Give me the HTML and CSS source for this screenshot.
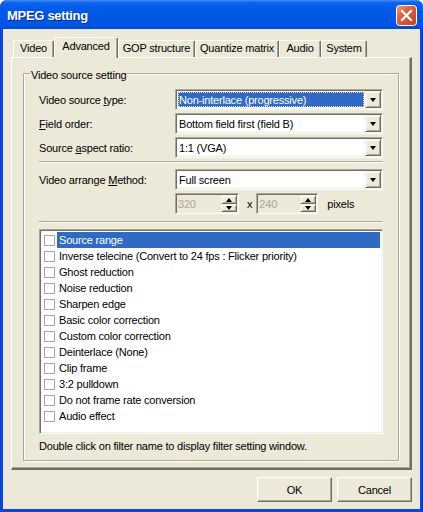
FILE: index.html
```html
<!DOCTYPE html>
<html>
<head>
<meta charset="utf-8">
<title>MPEG setting</title>
<link rel="stylesheet" href="styles.css">
</head>
<body>
<div class="window">
  <div class="titlebar">
    <span class="title">MPEG setting</span>
    <div class="close">
      <svg width="21" height="21" viewBox="0 0 21 21">
        <defs>
          <linearGradient id="cg" x1="0" y1="0" x2="1" y2="1">
            <stop offset="0" stop-color="#F0A18A"/>
            <stop offset="0.35" stop-color="#E06343"/>
            <stop offset="1" stop-color="#C2401C"/>
          </linearGradient>
        </defs>
        <rect x="0.5" y="0.5" width="20" height="20" rx="3" ry="3" fill="url(#cg)" stroke="#FFFFFF"/>
        <path d="M6 6 L15 15 M15 6 L6 15" stroke="#FFFFFF" stroke-width="2.2" stroke-linecap="square"/>
      </svg>
    </div>
  </div>
  <div class="frame">
    <div class="client">
      <div class="tabs">
        <div class="tab tw-video">Video</div>
        <div class="tab tab-active tw-adv">Advanced</div>
        <div class="tab tw-gop">GOP structure</div>
        <div class="tab tw-quant">Quantize matrix</div>
        <div class="tab tw-audio">Audio</div>
        <div class="tab tw-system">System</div>
      </div>
      <div class="panel">
        <div class="group">
          <div class="legend">Video source setting</div>
          <div class="row">
            <span class="label">Video source <u>t</u>ype:</span>
            <div class="combo">
              <span class="ctext ctext-focus"><span class="ctext-sel">Non-interlace (progressive)</span></span>
              <span class="ddbtn"><span class="arrow-down"></span></span>
            </div>
          </div>
          <div class="row">
            <span class="label"><u>F</u>ield order:</span>
            <div class="combo">
              <span class="ctext">Bottom field first (field B)</span>
              <span class="ddbtn"><span class="arrow-down"></span></span>
            </div>
          </div>
          <div class="row">
            <span class="label">Source <u>a</u>spect ratio:</span>
            <div class="combo">
              <span class="ctext">1:1 (VGA)</span>
              <span class="ddbtn"><span class="arrow-down"></span></span>
            </div>
          </div>
          <div class="sep sep-a"></div>
          <div class="row">
            <span class="label">Video arrange <u>M</u>ethod:</span>
            <div class="combo">
              <span class="ctext">Full screen</span>
              <span class="ddbtn"><span class="arrow-down"></span></span>
            </div>
          </div>
          <div class="spinrow">
            <div class="spin spin-w1">
              <span class="spintext">320</span>
              <span class="spinbtns">
                <span class="spinbtn spin-up"><span class="arrow-up"></span></span>
                <span class="spinbtn spin-down"><span class="arrow-down"></span></span>
              </span>
            </div>
            <span class="times">x</span>
            <div class="spin spin-w2">
              <span class="spintext">240</span>
              <span class="spinbtns">
                <span class="spinbtn spin-up"><span class="arrow-up"></span></span>
                <span class="spinbtn spin-down"><span class="arrow-down"></span></span>
              </span>
            </div>
            <span class="pixels">pixels</span>
          </div>
          <div class="sep sep-b"></div>
          <div class="list">
            <div class="item"><span class="chk"></span><span class="itext itext-sel">Source range</span></div>
            <div class="item"><span class="chk"></span><span class="itext">Inverse telecine (Convert to 24 fps : Flicker priority)</span></div>
            <div class="item"><span class="chk"></span><span class="itext">Ghost reduction</span></div>
            <div class="item"><span class="chk"></span><span class="itext">Noise reduction</span></div>
            <div class="item"><span class="chk"></span><span class="itext">Sharpen edge</span></div>
            <div class="item"><span class="chk"></span><span class="itext">Basic color correction</span></div>
            <div class="item"><span class="chk"></span><span class="itext">Custom color correction</span></div>
            <div class="item"><span class="chk"></span><span class="itext">Deinterlace (None)</span></div>
            <div class="item"><span class="chk"></span><span class="itext">Clip frame</span></div>
            <div class="item"><span class="chk"></span><span class="itext">3:2 pulldown</span></div>
            <div class="item"><span class="chk"></span><span class="itext">Do not frame rate conversion</span></div>
            <div class="item"><span class="chk"></span><span class="itext">Audio effect</span></div>
          </div>
          <div class="hint">Double click on filter name to display filter setting window.</div>
        </div>
      </div>
      <div class="buttons">
        <div class="btn">OK</div>
        <div class="btn">Cancel</div>
      </div>
    </div>
  </div>
</div>
</body>
</html>
```

FILE: styles.css
```css
* { box-sizing: border-box; }
html, body { margin: 0; padding: 0; }
body {
  width: 423px;
  height: 512px;
  overflow: hidden;
  background: #FFFFFF;
  font-family: "Liberation Sans", Arial, sans-serif;
  font-size: 11px;
  letter-spacing: -0.2px;
  color: #000000;
}
u { text-decoration: underline; text-underline-offset: 1px; }

.window {
  width: 423px;
  height: 512px;
  display: flex;
  flex-direction: column;
  border-radius: 7px 7px 0 0;
  overflow: hidden;
  background: #0A3FD8;
}

.titlebar {
  height: 29px;
  flex: none;
  display: flex;
  justify-content: space-between;
  align-items: flex-start;
  padding: 5px 6px 0 7px;
  background: linear-gradient(180deg, #4A8FF6 0px, #1468EE 2px, #0660EC 4px, #0058E6 45%, #0056E6 85%, #0049D2 100%);
}
.title {
  color: #FFFFFF;
  font-weight: bold;
  font-size: 13px;
  letter-spacing: -0.3px;
  line-height: 21px;
  text-shadow: 1px 1px 0 #0A2A8C;
}
.close { width: 21px; height: 21px; }
.close svg { display: block; }

.frame {
  flex: 1;
  display: flex;
  padding: 0 3px 3px 3px;
  background: linear-gradient(90deg, #0831D9 0, #0A48E0 1px, #0A48E0 calc(100% - 1px), #001DA8 100%);
}
.client {
  flex: 1;
  display: flex;
  flex-direction: column;
  background: #ECE9D8;
  padding: 8px 8px 7px 8px;
}

/* tabs */
.tabs {
  height: 20px;
  flex: none;
  display: flex;
  align-items: flex-end;
  padding-left: 2px;
}
.tab {
  height: 17px;
  line-height: 15px;
  text-align: center;
  background: #ECE9D8;
  border-top: 1px solid #FFFFFF;
  border-left: 1px solid #FFFFFF;
  border-right: 1px solid #716F64;
  box-shadow: inset -1px 0 0 #ACA899;
  border-radius: 2px 2px 0 0;
  white-space: nowrap;
}
.tab-active {
  height: 21px;
  line-height: 17px;
  margin-bottom: -1px;
  position: relative;
  z-index: 1;
}
.tw-video { width: 41px; }
.tw-adv { width: 64px; }
.tw-gop { width: 77px; }
.tw-quant { width: 84px; }
.tw-audio { width: 42px; }
.tw-system { width: 46px; }

.panel {
  flex: 1;
  border-top: 1px solid #FFFFFF;
  border-left: 1px solid #FFFFFF;
  border-right: 2px solid #716F64;
  border-bottom: 2px solid #716F64;
  box-shadow: inset -1px -1px 0 #ACA899;
  padding: 15px 11px 7px 11px;
  background: #ECE9D8;
}
.group {
  border: 1px solid #ACA899;
  box-shadow: 1px 1px 0 #FFFFFF, inset 1px 1px 0 #FFFFFF;
  padding: 0 15px 7px 15px;
}
.legend {
  display: table;
  margin: -5px 0 7px -9px;
  padding: 0 1px;
  line-height: 13px;
  background: #ECE9D8;
}

.row {
  display: flex;
  align-items: center;
  height: 21px;
  margin-bottom: 3px;
}
.label {
  width: 136px;
  flex: none;
  white-space: nowrap;
}

.combo, .spin, .list {
  border: 1px solid;
  border-color: #ACA899 #FFFFFF #FFFFFF #ACA899;
  box-shadow: inset 1px 1px 0 #716F64, inset -1px -1px 0 #F1EFE2;
  padding: 1px;
}
.combo {
  flex: 1;
  height: 21px;
  display: flex;
  background: #FFFFFF;
}
.ctext {
  flex: 1;
  display: flex;
  align-items: center;
  padding-left: 2px;
  white-space: nowrap;
}
.ctext-focus {
  padding: 1px;
}
.ctext-sel {
  flex: 1;
  align-self: stretch;
  display: flex;
  align-items: center;
  padding-left: 1px;
  background: #316AC5;
  color: #FFFFFF;
  outline: 1px dotted #C9D6EE;
  outline-offset: -1px;
}
.ddbtn, .spinbtn {
  display: flex;
  align-items: center;
  justify-content: center;
  background: #ECE9D8;
  border: 1px solid;
  border-color: #F1EFE2 #716F64 #716F64 #F1EFE2;
  box-shadow: inset 1px 1px 0 #FFFFFF, inset -1px -1px 0 #ACA899;
}
.ddbtn {
  width: 16px;
  flex: none;
}
.arrow-down {
  width: 0;
  height: 0;
  border-left: 3.5px solid transparent;
  border-right: 3.5px solid transparent;
  border-top: 4px solid #000000;
}
.arrow-up {
  width: 0;
  height: 0;
  border-left: 3.5px solid transparent;
  border-right: 3.5px solid transparent;
  border-bottom: 4px solid #000000;
}

.sep {
  height: 2px;
  border-top: 1px solid #ACA899;
  border-bottom: 1px solid #FFFFFF;
}
.sep-a { margin: 0 0 6px 0; }
.sep-b { margin: 7px 0 6px 0; }

.spinrow {
  display: flex;
  align-items: center;
  height: 21px;
  margin-left: 136px;
}
.spin {
  height: 21px;
  display: flex;
  background: #ECE9D8;
}
.spin-w1 { width: 64px; }
.spin-w2 { width: 62px; }
.spintext {
  flex: 1;
  display: flex;
  align-items: center;
  padding-left: 1px;
  color: #ACA899;
}
.spinbtns {
  width: 16px;
  flex: none;
  display: flex;
  flex-direction: column;
}
.spin-up { height: 9px; }
.spin-down { height: 8px; }
.times { margin: 0 4px 0 8px; }
.pixels { margin-left: 9px; }

.list {
  height: 205px;
  background: #FFFFFF;
  padding: 2px 2px;
}
.item {
  height: 16px;
  display: flex;
  align-items: center;
}
.chk {
  width: 11px;
  height: 11px;
  flex: none;
  margin: 0 2px 0 2px;
  border: 1px solid #A9A89E;
  background: #FFFFFF;
}
.itext {
  flex: 1;
  height: 16px;
  line-height: 16px;
  padding-left: 2px;
  white-space: nowrap;
}
.itext-sel {
  background: #316AC5;
  color: #FFFFFF;
}
.hint {
  margin-top: 6px;
  line-height: 13px;
}

.buttons {
  flex: none;
  display: flex;
  justify-content: flex-end;
  gap: 5px;
  margin-top: 7px;
}
.btn {
  width: 75px;
  height: 25px;
  display: flex;
  align-items: center;
  justify-content: center;
  background: #ECE9D8;
  border: 1px solid;
  border-color: #FFFFFF #716F64 #716F64 #FFFFFF;
  box-shadow: inset -1px -1px 0 #ACA899, inset 1px 1px 0 #F1EFE2;
}
```
